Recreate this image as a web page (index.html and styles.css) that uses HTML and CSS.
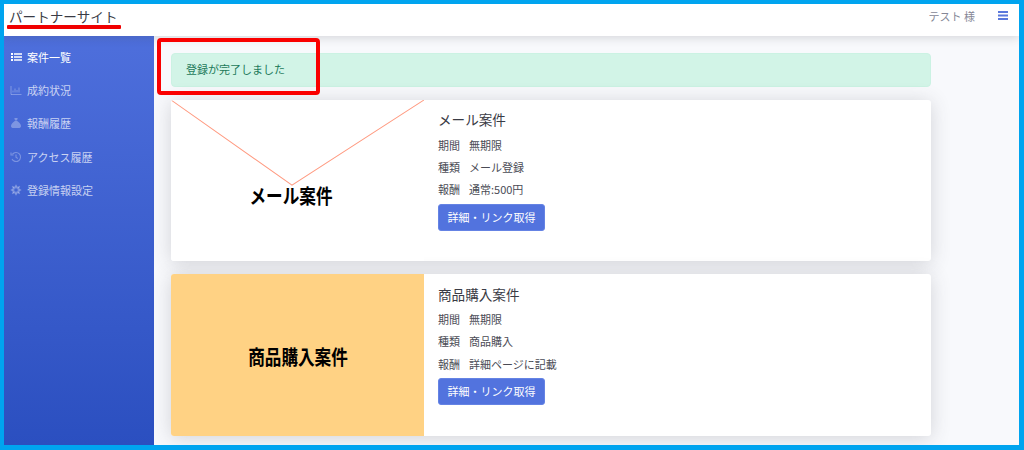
FILE: index.html
```html
<!DOCTYPE html>
<html lang="ja">
<head>
<meta charset="utf-8">
<title>パートナーサイト</title>
<link rel="stylesheet" href="styles.css">
</head>
<body>
<div class="frame">
  <header class="topbar">
    <div class="brand">パートナーサイト</div>
    <div class="user">テスト 様</div>
    <svg class="burger" width="10" height="9" viewBox="0 0 10 9"><path d="M0 0h10v2H0zM0 3.5h10v2H0zM0 7h10v2H0z" fill="#5a78dc"/></svg>
  </header>
  <div class="body">
    <nav class="sidebar">
      <a class="nav-item active">
        <svg class="ico" viewBox="0 0 12 12"><path d="M1 2h2v2H1zM4 2.300h8v1.400H4zM1 5h2v2H1zM4 5.300h8v1.400H4zM1 8h2v2H1zM4 8.300h8v1.400H4z" fill="currentColor"/></svg>
        <span>案件一覧</span>
      </a>
      <a class="nav-item">
        <svg class="ico" viewBox="0 0 12 12"><path d="M1 2v8.500h10.500M3 8.500V6.500M5 8.500V4.500M7 8.500V6M9 8.500V3.500" fill="none" stroke="currentColor" stroke-width="1"/></svg>
        <span>成約状況</span>
      </a>
      <a class="nav-item">
        <svg class="ico" viewBox="0 0 12 12"><path d="M4.300 1h3.400L7 3.500H5zM4.800 4h2.400C9.500 5.500 11 7.500 11 9c0 1.500-1 2-2.500 2h-5C2 11 1 10.500 1 9c0-1.500 1.500-3.500 3.800-5z" fill="currentColor"/></svg>
        <span>報酬履歴</span>
      </a>
      <a class="nav-item">
        <svg class="ico" viewBox="0 0 12 12"><path d="M2.500 3.200A4.500 4.500 0 1 1 2 8M1 1.500v2.500h2.500M6 3.500V6.300l1.800 1.200" fill="none" stroke="currentColor" stroke-width="1.100"/></svg>
        <span>アクセス履歴</span>
      </a>
      <a class="nav-item">
        <svg class="ico" viewBox="0 0 12 12"><circle cx="6" cy="6" r="2.800" fill="none" stroke="currentColor" stroke-width="2"/><path d="M6 .8v2M6 9.200v2M.8 6h2M9.200 6h2M2.300 2.300l1.500 1.500M8.200 8.200l1.500 1.500M9.700 2.300L8.200 3.800M3.800 8.200L2.300 9.700" stroke="currentColor" stroke-width="1.600"/></svg>
        <span>登録情報設定</span>
      </a>
    </nav>
    <main class="content">
      <div class="alert">登録が完了しました</div>
      <article class="card">
        <div class="thumb thumb-mail">
          <svg class="envelope" viewBox="0 0 253 161" preserveAspectRatio="none"><path d="M0 0L121 85L253 0" fill="none" stroke="#ff9a80" stroke-width="1"/></svg>
          <span class="thumb-label label-mail">メール案件</span>
        </div>
        <div class="info">
          <h2 class="title">メール案件</h2>
          <p class="row"><span class="key">期間</span>無期限</p>
          <p class="row"><span class="key">種類</span>メール登録</p>
          <p class="row"><span class="key">報酬</span>通常:500円</p>
          <a class="btn">詳細・リンク取得</a>
        </div>
      </article>
      <article class="card">
        <div class="thumb thumb-shop">
          <span class="thumb-label label-shop">商品購入案件</span>
        </div>
        <div class="info">
          <h2 class="title">商品購入案件</h2>
          <p class="row"><span class="key">期間</span>無期限</p>
          <p class="row"><span class="key">種類</span>商品購入</p>
          <p class="row"><span class="key">報酬</span>詳細ページに記載</p>
          <a class="btn">詳細・リンク取得</a>
        </div>
      </article>
    </main>
  </div>
  <div class="mark-underline"></div>
  <div class="mark-box"></div>
</div>
</body>
</html>
```
FILE: styles.css
```css
* { box-sizing: border-box; }
html, body { margin: 0; padding: 0; }
body {
  width: 1024px;
  height: 450px;
  overflow: hidden;
  font-family: "Noto Sans CJK JP", "Noto Sans", sans-serif;
  background: #00a4ef;
}
.frame {
  position: relative;
  width: 1024px;
  height: 450px;
  border: solid #00a4ef;
  border-width: 4px 5px 5px 4px;
  display: flex;
  flex-direction: column;
  overflow: hidden;
}
.topbar {
  height: 32px;
  flex: none;
  background: #fff;
  display: flex;
  align-items: center;
  padding: 0 11px 0 5px;
  box-shadow: 0 2px 10px rgba(58, 59, 69, .18);
  position: relative;
  z-index: 2;
}
.brand {
  font-size: 13.600px;
  color: #3a3b45;
  flex: 1;
  margin-top: -9px;
}
.user {
  font-size: 11px;
  color: #858796;
  margin-top: -8px;
  margin-right: 23px;
}
.burger { margin-top: -9px; }
.body {
  flex: 1;
  display: flex;
  min-height: 0;
}
.sidebar {
  width: 150px;
  flex: none;
  background: linear-gradient(180deg, #4e6fdc 0%, #2b4fc0 100%);
  padding-top: 4px;
  display: flex;
  flex-direction: column;
}
.nav-item {
  height: 33.300px;
  display: flex;
  align-items: center;
  padding-left: 6px;
  gap: 5px;
  font-size: 11px;
  color: rgba(255, 255, 255, .72);
}
.nav-item .ico { color: rgba(255, 255, 255, .3); }
.nav-item.active { color: #fff; }
.nav-item.active .ico { color: #fff; }
.ico { width: 12px; height: 12px; flex: none; }
.content {
  flex: 1;
  background: #f8f9fc;
  padding: 17px 88px 0 17px;
  display: flex;
  flex-direction: column;
  min-width: 0;
}
.alert {
  height: 34px;
  flex: none;
  background: #d2f4e7;
  border: 1px solid #cbf2e3;
  border-radius: 4px;
  color: #1d7a5a;
  font-size: 11px;
  display: flex;
  align-items: center;
  padding: 0 0 2px 14px;
  margin-bottom: 12.500px;
}
.card {
  height: 161.500px;
  flex: none;
  background: #fff;
  border-radius: 3px;
  display: flex;
  margin-bottom: 13px;
  box-shadow: 0 2px 20px rgba(58, 59, 69, .2);
  overflow: hidden;
}
.thumb {
  width: 253px;
  flex: none;
  position: relative;
  display: flex;
  align-items: center;
  justify-content: center;
}
.thumb-mail { background: #fff; }
.thumb-shop { background: #ffd284; }
.envelope {
  position: absolute;
  left: 0;
  top: 0;
  width: 100%;
  height: 100%;
}
.thumb-label {
  font-size: 20px;
  font-weight: 700;
  line-height: 1;
  color: #000;
  transform: scaleX(.83);
  white-space: nowrap;
  position: relative;
}
.label-mail { margin-left: -13px; margin-top: 31px; }
.label-shop { margin-top: 4px; }
.info {
  padding: 9.500px 14px;
  color: #3a3b45;
  flex: 1;
}
.title {
  margin: 0 0 3.500px;
  font-size: 13.600px;
  font-weight: 400;
  line-height: 21px;
}
.row {
  margin: 0;
  font-size: 11px;
  line-height: 22.300px;
  color: #4a4b55;
}
.key { margin-right: 9px; }
.btn {
  display: inline-block;
  margin-top: 3.500px;
  height: 27px;
  line-height: 24px;
  padding: 0 8.500px;
  background: #5273de;
  border: 1px solid #6583e4;
  border-radius: 3px;
  color: #fff;
  font-size: 11px;
}
.mark-underline {
  position: absolute;
  left: 3px;
  top: 20.500px;
  width: 114px;
  height: 4px;
  background: #f00000;
  border-radius: 1px;
  z-index: 3;
}
.mark-box {
  position: absolute;
  left: 153px;
  top: 34px;
  width: 163px;
  height: 57px;
  border: 4px solid #fa0000;
  border-radius: 4px;
  z-index: 3;
}
```
